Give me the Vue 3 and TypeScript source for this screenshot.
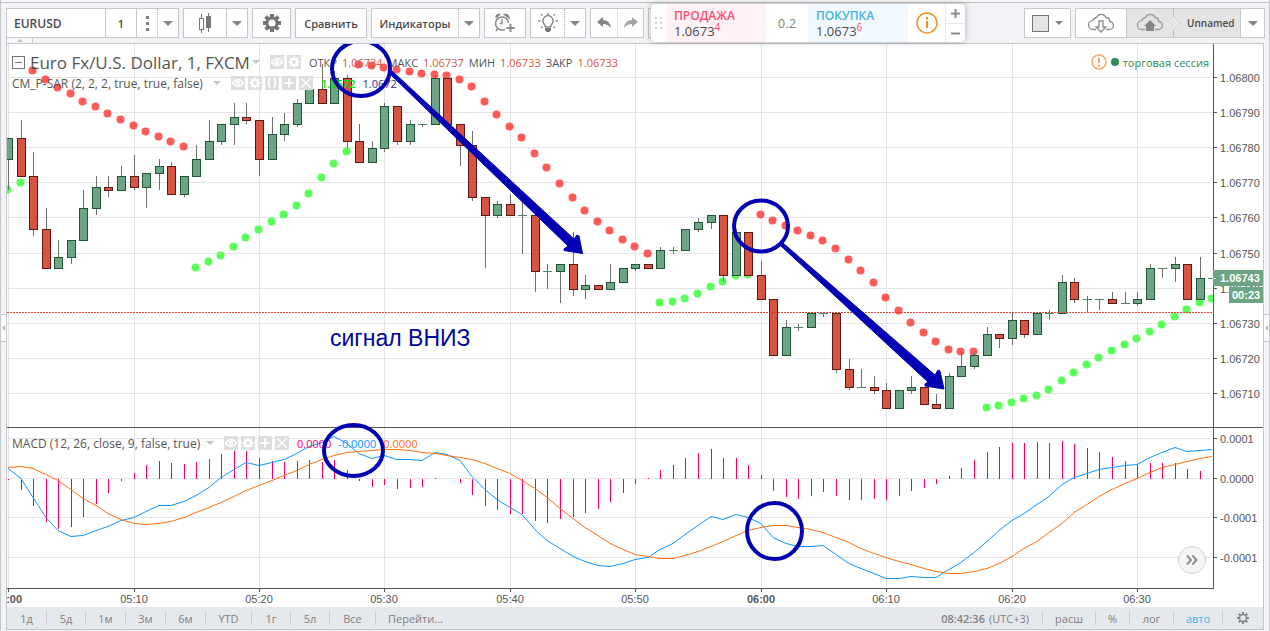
<script setup lang="ts">
type Candle = [kind: 'u' | 'd', high: number, top: number, bottom: number, low: number]

const slotX = (i: number): number => Math.floor(8.6 + 12.544 * i)

/* Each candle: direction, high, body top, body bottom, low (chart units, y grows down) */
const candles: Candle[] = [
  ['u', 138, 138, 160, 190], ['d', 120, 138, 177, 177], ['d', 152, 176, 230, 236], ['d', 208, 229, 269, 269],
  ['u', 240, 257, 269, 269], ['u', 240, 240, 258, 264], ['u', 190, 208, 241, 241], ['u', 176, 187, 209, 215],
  ['d', 176, 187, 191, 197], ['u', 166, 176, 191, 191], ['d', 155, 176, 188, 190], ['u', 173, 173, 188, 208],
  ['u', 159, 166, 174, 190], ['d', 162, 166, 195, 195], ['u', 176, 176, 195, 197], ['u', 145, 159, 177, 177],
  ['u', 120, 141, 160, 160], ['u', 124, 124, 142, 145], ['u', 103, 117, 125, 145], ['d', 103, 117, 121, 124],
  ['d', 120, 120, 160, 176], ['u', 117, 134, 160, 160], ['u', 113, 124, 135, 141], ['u', 99, 103, 125, 127],
  ['u', 82, 89, 104, 104], ['d', 64, 89, 104, 104], ['u', 71, 78, 104, 104], ['d', 75, 78, 142, 148],
  ['d', 124, 141, 163, 163], ['u', 141, 148, 163, 163], ['u', 103, 106, 149, 152], ['d', 106, 106, 142, 145],
  ['u', 120, 124, 142, 145], ['u', 124, 124, 125, 127], ['u', 75, 78, 125, 125], ['d', 78, 78, 125, 125],
  ['d', 124, 124, 146, 166], ['d', 131, 145, 198, 201], ['d', 197, 197, 216, 268], ['u', 201, 204, 216, 218],
  ['d', 194, 204, 216, 216], ['u', 200, 215, 216, 254], ['d', 215, 215, 272, 292], ['u', 264, 271, 272, 289],
  ['u', 264, 264, 272, 303], ['d', 232, 264, 290, 296], ['u', 275, 285, 290, 299], ['d', 285, 285, 290, 290],
  ['u', 264, 282, 290, 290], ['u', 268, 268, 283, 283], ['u', 264, 264, 269, 271], ['d', 264, 264, 269, 269],
  ['u', 247, 250, 269, 269], ['u', 247, 250, 251, 254], ['u', 229, 229, 251, 251], ['u', 218, 222, 230, 232],
  ['u', 215, 215, 223, 229], ['d', 215, 215, 276, 282], ['u', 229, 232, 276, 276], ['d', 232, 232, 276, 276],
  ['d', 261, 275, 300, 300], ['d', 299, 299, 356, 356], ['u', 320, 327, 356, 356], ['u', 324, 327, 328, 331],
  ['u', 313, 313, 328, 328], ['u', 313, 313, 314, 317], ['d', 313, 313, 370, 373], ['d', 359, 369, 388, 390],
  ['u', 369, 387, 388, 388], ['d', 376, 387, 391, 394], ['d', 383, 390, 409, 409], ['u', 390, 390, 409, 409],
  ['u', 376, 387, 391, 394], ['d', 387, 387, 405, 405], ['d', 394, 404, 409, 409], ['u', 373, 376, 409, 409],
  ['u', 352, 366, 377, 377], ['u', 352, 355, 367, 369], ['u', 327, 334, 356, 356], ['d', 334, 334, 339, 348],
  ['u', 313, 320, 339, 345], ['d', 320, 320, 335, 338], ['u', 313, 313, 335, 335], ['u', 310, 313, 314, 320],
  ['u', 275, 282, 314, 314], ['d', 278, 282, 300, 303], ['u', 296, 299, 300, 313], ['u', 299, 299, 300, 310],
  ['d', 292, 299, 304, 304], ['u', 292, 303, 304, 304], ['u', 292, 299, 304, 306], ['u', 264, 268, 300, 300],
  ['u', 268, 268, 269, 278], ['u', 257, 264, 269, 282], ['d', 264, 264, 300, 300], ['u', 257, 278, 300, 300],
  ['u', 278, 278, 279, 279],
]

/* Parabolic SAR runs: first slot and the y of every dot that follows */
const sarRuns: { kind: 'above' | 'below'; start: number; ys: number[] }[] = [
  { kind: 'below', start: 0, ys: [189, 182] },
  { kind: 'above', start: 2, ys: [70, 79, 87, 93, 101, 106, 113, 119, 125, 131, 136, 141, 146] },
  { kind: 'below', start: 15, ys: [267, 261, 255, 246, 237, 229, 221, 214, 205, 193, 177, 163, 151] },
  {
    kind: 'above', start: 28,
    ys: [64, 65, 67, 69, 71, 73, 74, 75, 79, 86, 101, 114, 126, 137, 153, 167, 183, 197, 210, 221, 230, 239, 246, 253],
  },
  { kind: 'below', start: 52, ys: [302, 301, 298, 293, 286, 281, 275, 274] },
  {
    kind: 'above', start: 60,
    ys: [214, 220, 225, 230, 235, 240, 248, 259, 270, 282, 297, 310, 322, 332, 341, 349, 351, 351],
  },
  {
    kind: 'below', start: 78,
    ys: [407, 405, 402, 398, 395, 389, 380, 372, 364, 357, 350, 344, 338, 331, 324, 316, 309, 302, 298],
  },
]
const sarDots = sarRuns.flatMap(r => r.ys.map((y, k) => ({ kind: r.kind, x: slotX(r.start + k), y })))

const histogram: number[] = [
  480, 490, 506, 522, 529, 527, 517, 504, 493, 481, 473, 465, 461, 463, 464, 462, 459, 454, 451, 451,
  458, 461, 462, 461, 460, 462, 460, 470, 481, 487, 485, 489, 488, 487, 478, 479, 483, 495, 506, 510,
  514, 514, 521, 523, 519, 517, 513, 509, 502, 493, 484, 478, 470, 465, 458, 453, 449, 458, 458, 465,
  475, 491, 497, 499, 496, 492, 496, 500, 500, 499, 500, 496, 491, 488, 484, 476, 468, 460, 452, 447,
  443, 443, 442, 443, 441, 444, 448, 452, 457, 461, 465, 463, 463, 463, 469, 471,
]
const ZERO = 479

const macdLine: number[] = [
  468, 478, 497, 517, 530, 536, 535, 530, 526, 520, 517, 511, 505, 505, 501, 495, 487, 477, 469, 462,
  465, 462, 459, 453, 446, 442, 436, 443, 453, 458, 455, 459, 459, 460, 452, 454, 460, 476, 489, 499,
  507, 514, 529, 540, 548, 556, 561, 565, 566, 563, 559, 557, 549, 543, 534, 525, 516, 519, 514, 517,
  523, 537, 543, 546, 546, 545, 554, 563, 568, 573, 578, 578, 576, 577, 577, 569, 562, 552, 541, 530,
  520, 513, 504, 496, 484, 477, 473, 469, 467, 465, 464, 457, 452, 447, 451, 450, 449,
]
const signalLine: number[] = [
  467, 466, 468, 474, 480, 489, 498, 505, 513, 519, 523, 524, 523, 521, 517, 512, 507, 502, 496, 490,
  485, 480, 475, 470, 464, 459, 455, 452, 451, 450, 449, 449, 450, 452, 453, 455, 457, 459, 463, 468,
  473, 480, 488, 497, 508, 518, 527, 535, 543, 549, 554, 556, 558, 558, 555, 551, 546, 541, 535, 530,
  527, 525, 525, 527, 529, 532, 537, 542, 548, 553, 557, 561, 564, 568, 571, 573, 573, 571, 568, 563,
  556, 548, 541, 532, 523, 512, 504, 496, 489, 483, 478, 472, 467, 464, 461, 458, 456,
]
const toPoints = (ys: number[]): string => ys.map((y, i) => `${slotX(i)},${y + 0.5}`).join(' ')

const priceTicks = [
  { y: 77, label: '1.06800' }, { y: 112, label: '1.06790' }, { y: 147, label: '1.06780' },
  { y: 182, label: '1.06770' }, { y: 217, label: '1.06760' }, { y: 253, label: '1.06750' },
  { y: 288, label: '1.06740' }, { y: 323, label: '1.06730' }, { y: 358, label: '1.06720' },
  { y: 393, label: '1.06710' },
]
const macdTicks = [
  { y: 438, label: '0.0001' }, { y: 478, label: '0.0000' }, { y: 517, label: '-0.0001' }, { y: 557, label: '-0.0001' },
]
const hourTicks = [
  { i: 0, label: '05:00', strong: true }, { i: 10, label: '05:10', strong: false },
  { i: 20, label: '05:20', strong: false }, { i: 30, label: '05:30', strong: false },
  { i: 40, label: '05:40', strong: false }, { i: 50, label: '05:50', strong: false },
  { i: 60, label: '06:00', strong: true }, { i: 70, label: '06:10', strong: false },
  { i: 80, label: '06:20', strong: false }, { i: 90, label: '06:30', strong: false },
]

const quotes = [
  { name: 'ОТКР', value: '1.06734' }, { name: 'МАКС', value: '1.06737' },
  { name: 'МИН', value: '1.06733' }, { name: 'ЗАКР', value: '1.06733' },
]
const ranges = [
  { label: '1д', size: 'day' }, { label: '5д', size: 'day' }, { label: '1м', size: 'month' },
  { label: '3м', size: 'month' }, { label: '6м', size: 'month' }, { label: 'YTD', size: 'wide' },
  { label: '1г', size: 'day' }, { label: '5л', size: 'day' }, { label: 'Все', size: 'wide' },
  { label: 'Перейти...', size: 'long' },
]

const toolNames: Record<string, string> = {
  eye: 'Показать', gear: 'Настройки', code: 'Код', plus: 'Добавить', close: 'Удалить',
}
const legends = [
  { id: 'main', tools: ['eye', 'gear'] },
  { id: 'sar', tools: ['eye', 'gear', 'code', 'plus', 'close'] },
  { id: 'osc', tools: ['eye', 'gear', 'plus', 'close'] },
]
const teeth = [0, 45, 90, 135, 180, 225, 270, 315]
</script>

<template>
  <div class="shell">
    <header class="toolbar">
      <div class="group symbol">
        <input class="ticker" type="text" value="EURUSD" aria-label="Символ">
        <button type="button" class="interval">1</button>
        <button type="button" class="dots" aria-label="Интервалы"><i /><i /><i /></button>
        <button type="button" class="drop dotted" aria-label="Выбрать интервал"><span class="caret" /></button>
      </div>
      <div class="group">
        <button type="button" class="w42" aria-label="Свечи">
          <svg width="14" height="20" viewBox="0 0 14 20">
            <path d="M3.5 1v4M3.5 16v4M10.5 0v19" stroke="#757575" fill="none" />
            <rect x="1.5" y="5.5" width="4" height="11" fill="#fff" stroke="#757575" />
            <rect x="8" y="3" width="5" height="12" fill="#757575" />
          </svg>
        </button>
        <button type="button" class="drop lined" aria-label="Тип графика"><span class="caret" /></button>
      </div>
      <div class="group">
        <button type="button" class="w37" aria-label="Свойства">
          <svg width="18" height="18" viewBox="-9 -9 18 18">
            <rect v-for="a in teeth" :key="a" x="-2" y="-9" width="4" height="4" fill="#757575" :transform="`rotate(${a})`" />
            <circle r="5" fill="none" stroke="#757575" stroke-width="3" />
          </svg>
        </button>
      </div>
      <div class="group"><button type="button" class="w70">Сравнить</button></div>
      <div class="group">
        <button type="button" class="w86">Индикаторы</button>
        <button type="button" class="drop dotted" aria-label="Список индикаторов"><span class="caret" /></button>
      </div>
      <div class="group">
        <button type="button" class="w40" aria-label="Добавить оповещение">
          <svg width="22" height="20" viewBox="0 0 22 20" fill="none" stroke="#8a8a8a" stroke-width="1.5">
            <path d="M11 16.3A6.5 6.5 0 1 1 14.5 10M2 4.5Q2 1.5 5.5 1.5L2 5M10.5 1.5Q14.5 1 15 5ZM8 6v4.5H5.5M3.5 15.5 2 18" />
            <path d="M16.5 11v8M12.5 15h8" stroke-width="2" />
          </svg>
        </button>
      </div>
      <div class="group">
        <button type="button" class="w33" aria-label="Идеи">
          <svg width="20" height="20" viewBox="0 0 20 20" fill="none" stroke="#8a8a8a" stroke-width="1.5">
            <path d="M7.5 14Q7 12 5.8 10.5A5 5 0 1 1 14.2 10.5Q13 12 12.5 14Z" />
            <path d="M10 0v2M3 1l1.5 1.5M17 1l-1.5 1.5M0 8h2.5M17.5 8H20M3 15l1.5-1.5M17 15l-1.5-1.5" />
            <path d="M7 15h6v2l-1.5 2h-3L7 17Z" fill="#757575" stroke="none" />
          </svg>
        </button>
        <button type="button" class="drop dotted" aria-label="Список идей"><span class="caret" /></button>
      </div>
      <div class="group">
        <button type="button" class="w26" aria-label="Отменить">
          <svg width="14" height="12" viewBox="0 0 14 12"><path d="M0 5 6 0v3q7 0 8 8-3-4-8-4v3Z" fill="#858585" /></svg>
        </button>
        <button type="button" class="w26 faint" aria-label="Повторить">
          <svg width="14" height="12" viewBox="0 0 14 12"><path d="M14 5 8 0v3q-7 0-8 8 3-4 8-4v3Z" fill="#a5a5a5" /></svg>
        </button>
      </div>
      <div class="group"><button type="button" class="w40" aria-label="Торговля" /></div>

      <section class="deal" aria-label="Торговая панель">
        <span class="grip"><i v-for="n in 6" :key="n" /></span>
        <button type="button" class="quote sell"><b>ПРОДАЖА</b><span>1.0673<sup>4</sup></span></button>
        <input class="spread" type="text" value="0.2" aria-label="Спред">
        <button type="button" class="quote buy"><b>ПОКУПКА</b><span>1.0673<sup>6</sup></span></button>
        <button type="button" class="info" aria-label="Информация">
          <svg width="22" height="22" viewBox="0 0 22 22">
            <circle cx="11" cy="11" r="10" fill="none" stroke="#f39021" stroke-width="1.5" />
            <path d="M11 5v2.5M11 9v7" stroke="#f39021" stroke-width="2" />
          </svg>
        </button>
        <div class="steps">
          <button type="button" aria-label="Больше"><svg width="9" height="9" viewBox="0 0 9 9"><path d="M4.5 0v9M0 4.5h9" stroke="#8c8c8c" stroke-width="2" /></svg></button>
          <button type="button" aria-label="Меньше"><svg width="9" height="9" viewBox="0 0 9 9"><path d="M0 4.5h9" stroke="#8c8c8c" stroke-width="2" /></svg></button>
        </div>
      </section>

      <div class="right">
        <div class="group">
          <button type="button" class="w45" aria-label="Цвет темы"><span class="swatch" /><span class="caret small" /></button>
        </div>
        <div class="group">
          <button type="button" class="w50" aria-label="Загрузить график">
            <svg width="26" height="20" viewBox="0 0 26 20" fill="none" stroke="#8c8c8c" stroke-width="1.3">
              <path d="M8 16.5H5A4.4 4.4 0 0 1 4.8 7.7 4.5 4.5 0 0 1 8.5 4.5 5.2 5.2 0 0 1 18 4.5 4 4 0 0 1 21.8 8.5 4 4 0 0 1 21 16.5H18" />
              <path d="M11 8h4v6h3l-5 5-5-5h3Z" />
            </svg>
          </button>
          <button type="button" class="w46 save" aria-label="Сохранить график">
            <svg width="26" height="20" viewBox="0 0 26 20" fill="none" stroke="#9a9a9a" stroke-width="1.3">
              <path d="M8 16.5H5A4.4 4.4 0 0 1 4.8 7.7 4.5 4.5 0 0 1 8.5 4.5 5.2 5.2 0 0 1 18 4.5 4 4 0 0 1 21.8 8.5 4 4 0 0 1 21 16.5H18" />
              <path d="M13 7l6 6h-2v5H9v-5H7Z" fill="#858585" stroke="none" />
            </svg>
          </button>
          <button type="button" class="w68 save named">
            <svg width="8" height="28" viewBox="0 0 8 28">
              <path d="M0.5 0V8L6.5 14 0.5 20V28" fill="none" stroke="#bdbdbd" />
              <path d="M-0.5 8L5.500 14 -0.5 20" fill="none" stroke="#fff" />
            </svg>
            Unnamed
          </button>
          <button type="button" class="drop lined wide" aria-label="Список графиков"><span class="caret" /></button>
        </div>
      </div>
      <button type="button" class="fold" aria-label="Свернуть панель"><span /></button>
    </header>

    <main class="stage">
      <button type="button" class="side left" aria-label="Панель рисования"><span /></button>
      <button type="button" class="side end" aria-label="Боковая панель"><span /></button>

      <div class="frame">
        <div class="plot">
          <svg class="canvas" viewBox="7 44 1256 563" role="img" aria-label="Euro Fx/U.S. Dollar">
            <g class="grid">
              <path v-for="t in hourTicks" :key="t.label" :d="`M${slotX(t.i) + 0.5} 44V587`" />
              <path v-for="t in [...priceTicks, ...macdTicks]" :key="t.y" :d="`M7 ${t.y + 0.5}H1212`" />
            </g>

            <circle v-for="(d, k) in sarDots" :key="'s' + k" :class="d.kind" :cx="d.x - 0.5" :cy="d.y + 0.5" r="4" />

            <g v-for="(c, i) in candles" :key="'c' + i" :class="c[0] === 'u' ? 'up' : 'down'">
              <path class="wick" :d="`M${slotX(i) + 0.5} ${c[1]}V${c[4]}`" />
              <path v-if="c[3] - c[2] === 1" class="flat" :d="`M${slotX(i) - 4} ${c[2] + 0.5}h9`" />
              <rect v-else class="body" :x="slotX(i) - 3.5" :y="c[2] + 0.5" width="8" :height="c[3] - c[2] - 1" />
            </g>

            <path class="last" d="M7 312.5H1213" />

            <path v-for="(y, i) in histogram" :key="'h' + i" class="bar" :d="`M${slotX(i) + 0.5} ${ZERO}V${y}`" />
            <polyline class="macd" :points="toPoints(macdLine)" />
            <polyline class="signal" :points="toPoints(signalLine)" />

            <rect class="gutter" x="1213" y="44" width="50" height="563" />
            <path class="axis" d="M1213.5 44V589M7 588.5H1214M7 427.5H1263" />
            <g v-for="t in [...priceTicks, ...macdTicks]" :key="'p' + t.y">
              <path class="axis" :d="`M1214 ${t.y + 0.5}h3`" />
              <text class="label" x="1220" :y="t.y + 5">{{ t.label }}</text>
            </g>
            <g v-for="t in hourTicks" :key="'t' + t.label">
              <path class="axis" :d="`M${slotX(t.i) + 0.5} 589v3`" />
              <text class="label mid" :class="{ strong: t.strong }" :x="slotX(t.i)" y="603">{{ t.label }}</text>
            </g>
            <rect class="tag" x="1213" y="270" width="50" height="16" />
            <path d="M1213 278.5h3" stroke="#fff" />
            <text class="label light" x="1220" y="282">1.06743</text>
            <rect class="tag" x="1229" y="287" width="34" height="16" />
            <text class="label light" x="1232" y="299">00:23</text>
          </svg>

          <div v-for="l in legends" :key="l.id" class="legend" :class="l.id">
            <button v-if="l.id === 'main'" type="button" class="minus" aria-label="Свернуть" />
            <h1 v-if="l.id === 'main'">Euro Fx/U.S. Dollar, 1, FXCM</h1>
            <h2 v-else-if="l.id === 'sar'">CM_P-SAR (2, 2, 2, true, true, false)</h2>
            <h2 v-else>MACD (12, 26, close, 9, false, true)</h2>
            <span class="caret pale" />
            <span class="tools">
              <button v-for="t in l.tools" :key="t" type="button" :aria-label="toolNames[t]">
                <svg width="14" height="14" viewBox="0 0 14 14" fill="none" stroke="#fff" stroke-width="1.5">
                  <template v-if="t === 'eye'">
                    <path d="M1.5 7Q7 0 12.5 7 7 14 1.5 7Z" /><circle cx="7" cy="7" r="1.5" />
                  </template>
                  <template v-else-if="t === 'gear'">
                    <circle cx="7" cy="7" r="3" stroke-width="2" />
                    <path v-for="a in teeth" :key="a" d="M7 4V1.5" stroke-width="2" :transform="`rotate(${a} 7 7)`" />
                  </template>
                  <path v-else-if="t === 'code'" d="M5.5 2.5Q4 2.5 4 4.5 4 7 2.5 7 4 7 4 9.5 4 11.5 5.5 11.5M8.5 2.5Q10 2.5 10 4.5 10 7 11.5 7 10 7 10 9.5 10 11.5 8.5 11.5" />
                  <path v-else-if="t === 'plus'" d="M7 2.5v9M2.5 7h9" stroke-width="2" />
                  <path v-else d="M2.5 2.5l9 9M11.5 2.5l-9 9" />
                </svg>
              </button>
            </span>
            <span v-if="l.id === 'main'" class="values">
              <span v-for="q in quotes" :key="q.name" class="ohlc"><span>{{ q.name }}</span><em>{{ q.value }}</em></span>
            </span>
            <span v-else-if="l.id === 'sar'" class="values"><b class="lime">1.0672</b><em class="navy">1.0672</em></span>
            <span v-else class="values"><em class="pink">0.0000</em><em class="blue">-0.0000</em><em class="orange">0.0000</em></span>
          </div>

          <div class="session">
            <svg width="16" height="16" viewBox="0 0 16 16">
              <circle cx="8" cy="8" r="7" fill="none" stroke="#f9a361" stroke-width="1.5" />
              <path d="M8 4v5M8 10.5v2" stroke="#f9a361" stroke-width="2" />
            </svg>
            <i /><span>торговая сессия</span>
          </div>

          <button type="button" class="latest" aria-label="К последней свече">
            <svg width="12" height="10" viewBox="0 0 12 10"><path d="M1 0.5 5 5 1 9.5M6.5 0.5l4 4.5-4 4.5" fill="none" stroke="#8c8c8c" stroke-width="2" /></svg>
          </button>

          <svg class="canvas notes" viewBox="7 44 1256 563" aria-hidden="true">
            <ellipse cx="361" cy="68.5" rx="29" ry="27.5" />
            <ellipse cx="761" cy="226" rx="27" ry="25.5" />
            <ellipse cx="353.5" cy="450.5" rx="29.5" ry="25.5" />
            <ellipse cx="774.5" cy="531" rx="27.5" ry="28" />
            <path d="M392 71 574 239 577 235 579 236 582.5 253.5 564 250.5 564 249 568 246 390 74Z" />
            <path d="M783 243 935 375 938 370 940 371 944 389 925 386 925 384 928 382 781 246Z" />
            <text x="330" y="346">сигнал ВНИЗ</text>
          </svg>
        </div>

        <footer class="bottom">
          <nav class="ranges" aria-label="Диапазон">
            <button v-for="r in ranges" :key="r.label" type="button" :class="r.size">{{ r.label }}</button>
          </nav>
          <div class="scale">
            <button type="button" class="clock"><b>08:42:36</b> (UTC+3)</button>
            <button type="button" class="c53">расш</button>
            <button type="button" class="c34">%</button>
            <button type="button" class="c44">лог</button>
            <button type="button" class="c49 on">авто</button>
            <button type="button" class="c40" aria-label="Настройки шкалы">
              <svg width="12" height="12" viewBox="-6 -6 12 12">
                <rect v-for="a in teeth" :key="a" x="-1" y="-6" width="2" height="2" fill="#858585" :transform="`rotate(${a})`" />
                <circle r="3.5" fill="none" stroke="#858585" stroke-width="1.5" />
              </svg>
            </button>
          </div>
        </footer>
      </div>
    </main>
  </div>
</template>

<style>
body {
  margin: 0;
  background: #f1f3f7;
}
</style>

<style scoped>
.shell {
  box-sizing: border-box;
  min-height: 100vh;
  border-left: 1px solid #c4c6ca;
  border-right: 1px solid #c4c6ca;
  background: #f1f3f7;
  font-family: "Open Sans", "Noto Sans", sans-serif;
  font-size: 11px;
  color: #4a4a4a;
}
button, input {
  box-sizing: border-box;
  margin: 0;
  padding: 0;
  border: 0;
  border-radius: 0;
  background: none;
  font: inherit;
  color: inherit;
}
button {
  display: flex;
  align-items: center;
  justify-content: center;
  cursor: pointer;
}
svg { display: block; }
.toolbar {
  position: relative;
  display: flex;
  gap: 4px;
  height: 35px;
  padding: 5px 4px 0 5px;
  border-top: 1px solid #c0c0c0;
  box-shadow: 0 -2px #f7f7f7;
  font-weight: 600;
}
.shell { padding-top: 2px; }
.group {
  display: flex;
  box-sizing: border-box;
  height: 30px;
  border: 1px solid #c6c8cc;
  background: #fff;
}
.group > button { height: 28px; }
.ticker { width: 98px; padding-left: 7px; font-size: 12px; }
.interval { width: 31px; border-left: 1px solid #c6c8cc; }
.dots {
  width: 21px;
  flex-direction: column;
  gap: 3px;
  border-left: 1px solid #c6c8cc;
}
.dots i { width: 3px; height: 3px; background: #808080; }
.drop { width: 21px; }
.drop.wide { width: 24px; }
.dotted { border-left: 1px dotted #b0b0b0; }
.lined { border-left: 1px solid #c6c8cc; }
.caret {
  border: 5px solid transparent;
  border-top-color: #858585;
  border-bottom: 0;
}
.caret.small { border-width: 4px 4px 0; }
.w26 { width: 26px; }
.w33 { width: 33px; }
.w37 { width: 37px; }
.w40 { width: 40px; }
.w42 { width: 42px; }
.w45 { width: 45px; gap: 6px; }
.w46 { width: 47px; }
.w50 { width: 50px; }
.w68 { width: 67px; }
.w70 { width: 70px; }
.w86 { width: 86px; }
.faint { border-left: 1px solid #e2e2e2; }
.swatch {
  width: 15px;
  height: 15px;
  border: 1px solid #757575;
  background: #e4e4e4;
}
.save { background: #e4e4e4; }
.w46.save { border-left: 1px solid #c6c8cc; }
.named { justify-content: flex-start; gap: 6px; font-size: 10px; }
.right { display: flex; gap: 4px; margin-left: auto; }
.fold {
  position: absolute;
  left: 5px;
  top: 35px;
  width: 27px;
  height: 6px;
  border: 1px solid #c6c8cc;
  border-top: 0;
  background: #f7f7f9;
}
.fold span {
  border: 3px solid transparent;
  border-bottom-color: #c0c0c0;
  border-top: 0;
}
.deal {
  position: absolute;
  left: 650px;
  top: 1px;
  z-index: 3;
  display: flex;
  height: 38px;
  border-radius: 4px;
  background: #fff;
  box-shadow: 0 0 6px rgba(0, 0, 0, 0.3);
  overflow: hidden;
}
.grip {
  display: grid;
  grid-template-columns: 2px 2px;
  gap: 3px;
  align-content: center;
  justify-content: center;
  width: 15px;
}
.grip i { height: 2px; background: #d4d4d4; }
.quote {
  flex-direction: column;
  align-items: flex-start;
  width: 100px;
  padding-left: 8px;
  font-size: 13px;
  line-height: 15px;
  font-weight: 400;
}
.quote b { font-size: 12px; font-weight: 600; }
.quote sup { font-size: 10px; line-height: 8px; color: #fc4c72; vertical-align: 5px; }
.sell { background: #fff2f5; }
.sell b { color: #fc4c72; }
.buy { background: #f2f9fe; }
.buy b { color: #42b4e6; }
.spread { width: 42px; text-align: center; font-size: 13px; font-weight: 400; color: #858585; }
.info { width: 37px; }
.steps { width: 19px; border-left: 1px solid #e4ebf0; }
.steps button { width: 100%; height: 19px; }
.steps button + button { border-top: 1px solid #e8e8e8; }

.stage { position: relative; padding: 0 5px; }
.side {
  position: absolute;
  top: 271px;
  width: 6px;
  height: 28px;
  border: 1px solid #c6c8cc;
  background: #fff;
}
.side.left { left: 0; border-left: 0; }
.side.end { right: 0; border-right: 0; }
.side span { border: 3px solid transparent; border-right-color: #b4b4b4; border-left: 0; }
.frame { border: 1px solid #c4c6ca; background: #fff; }
.plot { position: relative; }
.canvas { width: 100%; height: auto; }
.notes { position: absolute; inset: 0; z-index: 2; pointer-events: none; }
.notes ellipse { fill: none; stroke: #0202b4; stroke-width: 4; }
.notes path { fill: #0202b4; stroke: #0202b4; stroke-width: 1; stroke-linejoin: round; }
.notes text { font: 23px "Liberation Sans", Arial, sans-serif; fill: #0202a0; }
.grid path { stroke: #e4e4e4; }
.above { fill: #ff5a5a; }
.below { fill: #5aff5a; }
.last { stroke: #e0402c; stroke-dasharray: 2 1; shape-rendering: crispEdges; }
.wick { stroke: #6e6e6e; }
.up .body { fill: #6ba583; stroke: #225437; }
.down .body { fill: #d75442; stroke: #5b1a13; }
.flat { stroke: #4d8566; }
.bar { stroke: #f50068; }
.macd, .signal { fill: none; stroke-width: 1; }
.macd { stroke: #0e96ff; }
.signal { stroke: #ff7010; }
.gutter { fill: #fff; }
.axis { fill: none; stroke: #555; }
.label { font: 11px "Liberation Sans", Arial, sans-serif; fill: #555; }
.mid { text-anchor: middle; }
.strong { font-weight: 700; }
.light { font-weight: 700; fill: #fff; }
.tag { fill: #6ba583; }

.legend {
  position: absolute;
  left: 5px;
  z-index: 1;
  display: flex;
  align-items: center;
  height: 20px;
  color: #555;
}
.legend.main { top: 8px; }
.legend.sar { top: 29px; }
.legend.osc { top: 389px; }
h1, h2 { margin: 0; font-weight: 400; white-space: nowrap; }
h1 { width: 222px; margin-left: 5px; font-size: 17px; }
h2 { font-size: 12px; }
.sar h2 { width: 201px; }
.osc h2 { width: 194px; }
.minus {
  width: 13px;
  height: 13px;
  border: 1px solid #757575;
}
.minus::before { content: ""; width: 7px; height: 1px; background: #757575; }
.pale { border-width: 4px 4px 0; border-top-color: #c4c4c4; }
.tools { display: flex; gap: 3px; margin-left: 10px; }
.tools button { width: 14px; height: 14px; background: #dedede; }
.values { display: flex; gap: 7px; margin-left: 8px; white-space: nowrap; }
.ohlc { display: flex; gap: 5px; }
.main .values { gap: 5px; }
em { font-style: normal; color: #d75442; }
.lime { color: #00e600; font-weight: 600; }
.navy { color: #30308c; }
.pink { color: #f50068; }
.blue { color: #0e96ff; }
.orange { color: #ff7010; }
.session {
  position: absolute;
  top: 10px;
  right: 54px;
  display: flex;
  align-items: center;
  gap: 4px;
  font-weight: 500;
  color: #2e8b57;
}
.session i { width: 8px; height: 8px; border-radius: 50%; background: #2e8b57; }
.latest {
  position: absolute;
  right: 57px;
  bottom: 33px;
  z-index: 1;
  width: 28px;
  height: 28px;
  border: 1px solid #d0d0d0;
  border-radius: 50%;
  background: #f5f5f5;
}
.bottom {
  display: flex;
  justify-content: space-between;
  height: 22px;
  background: #e5e8ec;
  font-weight: 500;
  color: #808080;
}
.ranges, .scale { display: flex; align-items: center; }
.ranges button, .scale button { height: 14px; white-space: nowrap; }
.day { width: 39px; }
.month { width: 40px; }
.wide { width: 46px; }
.long { width: 80px; }
.ranges button + button, .scale button + button { border-left: 1px solid #c8cacd; }
.clock { gap: 4px; padding-right: 13px; }
.clock b { font-weight: 600; }
.c53 { width: 53px; }
.c34 { width: 34px; }
.c44 { width: 44px; }
.c49 { width: 49px; }
.c40 { width: 41px; }
.on { color: #42b4e6; }
</style>
